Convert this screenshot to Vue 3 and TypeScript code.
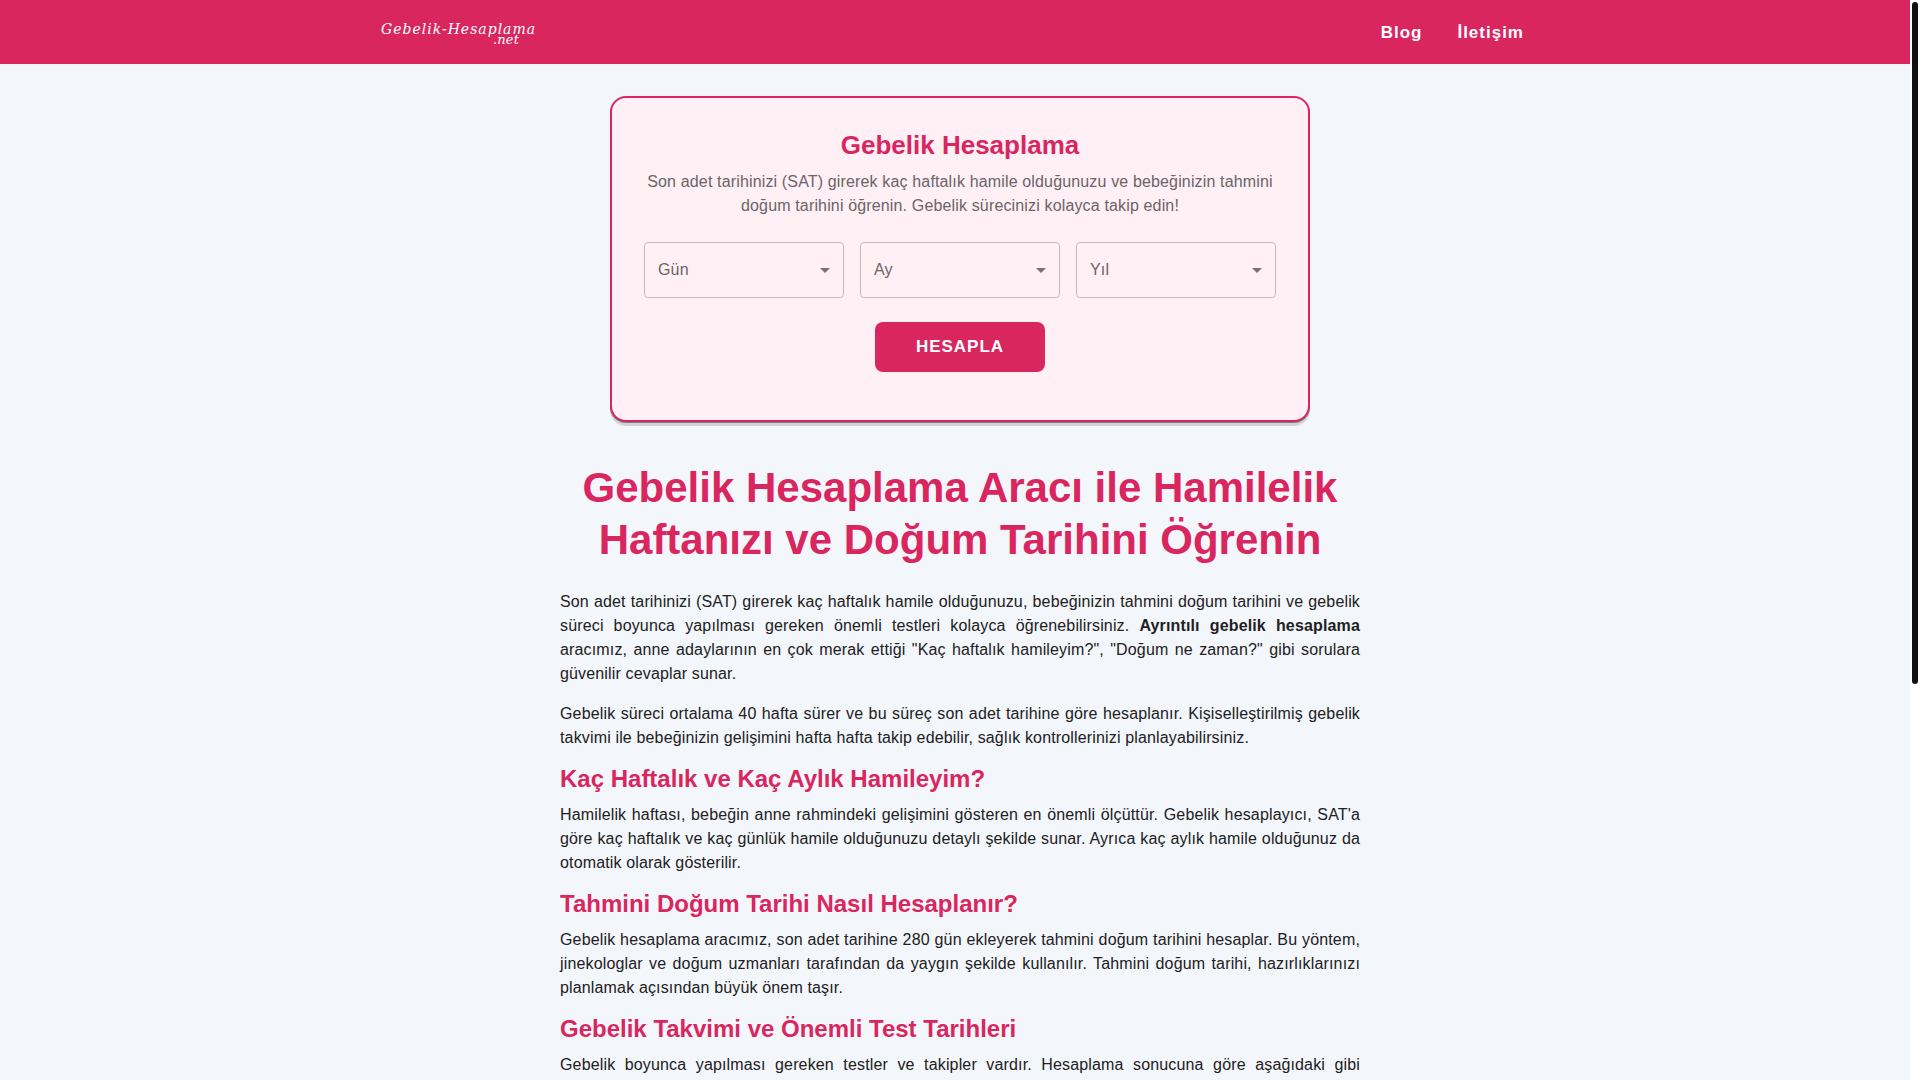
<script setup lang="ts">
import { reactive, ref } from 'vue'

interface DateField {
  key: 'day' | 'month' | 'year'
  label: string
  options: (string | number)[]
}

const months = ['Ocak', 'Şubat', 'Mart', 'Nisan', 'Mayıs', 'Haziran', 'Temmuz', 'Ağustos', 'Eylül', 'Ekim', 'Kasım', 'Aralık']
const thisYear = new Date().getFullYear()

const fields: DateField[] = [
  { key: 'day', label: 'Gün', options: Array.from({ length: 31 }, (_, i) => i + 1) },
  { key: 'month', label: 'Ay', options: months },
  { key: 'year', label: 'Yıl', options: [thisYear - 1, thisYear] },
]

const form = reactive<Record<DateField['key'], string | number>>({ day: '', month: '', year: '' })
const dueDate = ref('')

function calculate(): void {
  if (!form.day || !form.month || !form.year) return
  const date = new Date(Number(form.year), months.indexOf(String(form.month)), Number(form.day))
  date.setDate(date.getDate() + 280)
  dueDate.value = date.toLocaleDateString('tr-TR')
}

const sections = [
  {
    title: 'Kaç Haftalık ve Kaç Aylık Hamileyim?',
    text: "Hamilelik haftası, bebeğin anne rahmindeki gelişimini gösteren en önemli ölçüttür. Gebelik hesaplayıcı, SAT'a göre kaç haftalık ve kaç günlük hamile olduğunuzu detaylı şekilde sunar. Ayrıca kaç aylık hamile olduğunuz da otomatik olarak gösterilir.",
  },
  {
    title: 'Tahmini Doğum Tarihi Nasıl Hesaplanır?',
    text: 'Gebelik hesaplama aracımız, son adet tarihine 280 gün ekleyerek tahmini doğum tarihini hesaplar. Bu yöntem, jinekologlar ve doğum uzmanları tarafından da yaygın şekilde kullanılır. Tahmini doğum tarihi, hazırlıklarınızı planlamak açısından büyük önem taşır.',
  },
  {
    title: 'Gebelik Takvimi ve Önemli Test Tarihleri',
    text: 'Gebelik boyunca yapılması gereken testler ve takipler vardır. Hesaplama sonucuna göre aşağıdaki gibi',
    fill: true,
  },
]
</script>

<template>
  <div class="page">
    <header class="bar">
      <div class="bar-inner">
        <a class="logo" href="#">
          <span class="logo-name">Gebelik-Hesaplama</span>
          <span class="logo-tld">.net</span>
        </a>
        <nav class="nav">
          <a href="#blog">Blog</a>
          <a href="#iletisim">İletişim</a>
        </nav>
      </div>
    </header>

    <main>
      <form class="card" @submit.prevent="calculate">
        <h2 class="card-title">Gebelik Hesaplama</h2>
        <p class="card-text">
          Son adet tarihinizi (SAT) girerek kaç haftalık hamile olduğunuzu ve bebeğinizin tahmini doğum tarihini öğrenin. Gebelik sürecinizi kolayca takip edin!
        </p>
        <div class="fields">
          <div v-for="field in fields" :key="field.key" class="field">
            <select :id="field.key" v-model="form[field.key]">
              <option value="" hidden></option>
              <option v-for="option in field.options" :key="option" :value="option">{{ option }}</option>
            </select>
            <label :for="field.key" :class="{ raised: form[field.key] !== '' }">{{ field.label }}</label>
            <svg class="arrow" viewBox="0 0 24 24" aria-hidden="true"><path d="M7 10l5 5 5-5z" /></svg>
          </div>
        </div>
        <button class="submit" type="submit">HESAPLA</button>
        <p v-if="dueDate" class="card-text">Tahmini doğum tarihi: {{ dueDate }}</p>
      </form>

      <article class="article">
        <h1>Gebelik Hesaplama Aracı ile Hamilelik Haftanızı ve Doğum Tarihini Öğrenin</h1>
        <p class="intro">
          Son adet tarihinizi (SAT) girerek kaç haftalık hamile olduğunuzu, bebeğinizin tahmini doğum tarihini ve gebelik süreci boyunca yapılması gereken önemli testleri kolayca öğrenebilirsiniz. <strong>Ayrıntılı gebelik hesaplama</strong> aracımız, anne adaylarının en çok merak ettiği "Kaç haftalık hamileyim?", "Doğum ne zaman?" gibi sorulara güvenilir cevaplar sunar.
        </p>
        <p>
          Gebelik süreci ortalama 40 hafta sürer ve bu süreç son adet tarihine göre hesaplanır. Kişiselleştirilmiş gebelik takvimi ile bebeğinizin gelişimini hafta hafta takip edebilir, sağlık kontrollerinizi planlayabilirsiniz.
        </p>
        <section v-for="section in sections" :key="section.title">
          <h2>{{ section.title }}</h2>
          <p :class="{ fill: section.fill }">{{ section.text }}</p>
        </section>
      </article>
    </main>

    <div class="scrollbar" aria-hidden="true"><div class="thumb"></div></div>
  </div>
</template>

<style>
body {
  background: #f3f6fb;
}
</style>

<style scoped>
.page {
  min-height: 100vh;
  font-family: 'Liberation Sans', Arial, sans-serif;
  font-size: 16px;
  line-height: 24px;
  letter-spacing: 0.00938em;
  color: #212121;
}

.page *,
.page *::before {
  box-sizing: border-box;
}

.bar {
  background: #d9265f;
}

.bar-inner {
  display: flex;
  align-items: center;
  justify-content: space-between;
  max-width: 1200px;
  height: 64px;
  margin: 0 auto;
  padding: 2px 36px 0 21px;
}

.logo {
  display: flex;
  flex-direction: column;
  color: #fff;
  font: italic 14px/14px 'DejaVu Serif', serif;
  text-decoration: none;
}

.logo-name {
  letter-spacing: 1px;
}

.logo-tld {
  align-self: flex-end;
  padding-right: 17px;
  font-size: 13px;
  line-height: 8px;
}

.nav {
  display: flex;
  gap: 35px;
}

.nav a {
  color: #fff;
  font-size: 17px;
  font-weight: 700;
  letter-spacing: 1px;
  text-decoration: none;
}

.card {
  max-width: 700px;
  margin: 32px auto 40px;
  padding: 32px;
  border: 2px solid #d9265f;
  border-radius: 16px;
  background: #fff0f5;
  box-shadow: 0 1px 0 rgba(0, 0, 0, 0.4), 0 4px 0 rgba(0, 0, 0, 0.14);
  text-align: center;
}

.card-title {
  margin: 0 0 10px;
  color: #d9265f;
  font-size: 26px;
  line-height: 30px;
  letter-spacing: 0;
}

.card-text {
  margin: 0 0 24px;
  color: #6b6467;
}

.fields {
  display: flex;
  gap: 16px;
  margin-bottom: 24px;
}

.field {
  position: relative;
  flex: 1;
}

.field select {
  display: block;
  width: 100%;
  height: 56px;
  padding: 0 32px 0 13px;
  border: 1px solid #c4b9bd;
  border-radius: 4px;
  background: transparent;
  color: #212121;
  font: inherit;
  appearance: none;
}

.field label {
  position: absolute;
  top: 16px;
  left: 14px;
  color: #6b6467;
  pointer-events: none;
}

.field label.raised {
  top: -12px;
  left: 10px;
  padding: 0 4px;
  background: #fff0f5;
  font-size: 12px;
}

.arrow {
  position: absolute;
  top: 16px;
  right: 7px;
  width: 24px;
  height: 24px;
  fill: #757072;
  pointer-events: none;
}

.submit {
  min-width: 170px;
  height: 50px;
  margin-bottom: 16px;
  padding: 0 40px;
  border: 0;
  border-radius: 8px;
  background: #d9265f;
  color: #fff;
  font: 700 17px/24px 'Liberation Sans', Arial, sans-serif;
  letter-spacing: 1px;
  cursor: pointer;
}

.article {
  max-width: 800px;
  margin: 0 auto;
  text-align: justify;
}

.article h1 {
  margin: 0 0 24px;
  color: #d9265f;
  font-size: 42px;
  line-height: 52px;
  letter-spacing: 0;
  text-align: center;
}

.article p {
  margin: 0 0 13px;
}

.article p.intro {
  margin-bottom: 16px;
}

.article h2 {
  margin: 0 0 8px;
  color: #d9265f;
  font-size: 24px;
  line-height: 32px;
  letter-spacing: 0;
  text-align: left;
}

.article p.fill {
  margin-bottom: 0;
  text-align-last: justify;
}

.scrollbar {
  position: fixed;
  top: 0;
  right: 0;
  bottom: 0;
  width: 10px;
  padding: 2px;
  background: #fff;
}

.thumb {
  height: 63.4%;
  border-radius: 3px;
  background: #111;
}
</style>
